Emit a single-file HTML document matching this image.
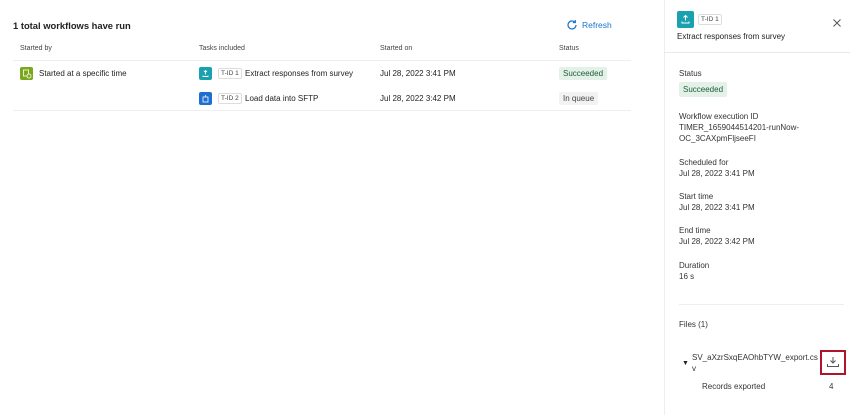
<!DOCTYPE html>
<html><head><style>
*{margin:0;padding:0;box-sizing:border-box}
body{width:850px;height:415px;background:#fff;font-family:"Liberation Sans",sans-serif;color:#222;position:relative;overflow:hidden;font-size:8px}
.a{position:absolute;white-space:nowrap}
.h{font-size:7px;color:#444}
.tid{position:absolute;border:1px solid #ddd;border-radius:2px;font-size:6.5px;color:#444;padding:1px 2px;background:#fff}
.ico{position:absolute;width:13px;height:13px;border-radius:2px}
.badge{position:absolute;border-radius:2px;padding:2px 4px;font-size:8px}
.lbl{font-size:8px;color:#333}
</style></head><body>
<div class="a" style="left:13px;top:20px;font-size:9.4px;font-weight:bold;color:#222">1 total workflows have run</div>
<svg class="a" style="left:566px;top:19px" width="12" height="12" viewBox="0 0 12 12"><path d="M10 6a4 4 0 1 1-1.3-3" fill="none" stroke="#1a73c9" stroke-width="1.2"/><path d="M9.3 1v2.5H6.8" fill="none" stroke="#1a73c9" stroke-width="1.2"/></svg>
<div class="a" style="left:582px;top:20px;color:#1a73c9;font-size:8.5px">Refresh</div>
<div class="a h" style="left:20px;top:45px">Started by</div>
<div class="a h" style="left:199px;top:45px">Tasks included</div>
<div class="a h" style="left:380px;top:45px">Started on</div>
<div class="a h" style="left:559px;top:45px">Status</div>
<div class="a" style="left:13px;top:60px;width:618px;height:1px;background:#eee"></div>
<div class="ico" style="left:20px;top:67px;background:#7aa81c"><svg width="13" height="13"><rect x="3.5" y="3" width="5" height="6" fill="none" stroke="#fff" stroke-width=".8"/><circle cx="9" cy="9" r="2" fill="#7aa81c" stroke="#fff" stroke-width=".8"/></svg></div>
<div class="a" style="left:39px;top:69px">Started at a specific time</div>
<div class="ico" style="left:199px;top:67px;background:#1aa1b0"><svg width="13" height="13"><path d="M6.5 3.5v4M5 5l1.5-1.5L8 5M4 8.5v1h5v-1" fill="none" stroke="#fff" stroke-width=".9"/></svg></div>
<div class="tid" style="left:218px;top:68px">T-ID 1</div>
<div class="a" style="left:245px;top:69px">Extract responses from survey</div>
<div class="a" style="left:380px;top:69px">Jul 28, 2022 3:41 PM</div>
<div class="badge" style="left:559px;top:67px;background:#e3f1e8;color:#1d5b34">Succeeded</div>
<div class="ico" style="left:199px;top:92px;background:#1f6fd0"><svg width="13" height="13"><rect x="4" y="5" width="5" height="5" fill="none" stroke="#fff" stroke-width=".8"/><path d="M6.5 3v2" stroke="#fff" stroke-width=".8"/></svg></div>
<div class="tid" style="left:218px;top:93px">T-ID 2</div>
<div class="a" style="left:245px;top:94px">Load data into SFTP</div>
<div class="a" style="left:380px;top:94px">Jul 28, 2022 3:42 PM</div>
<div class="badge" style="left:559px;top:92px;background:#f2f2f2;color:#444">In queue</div>
<div class="a" style="left:13px;top:110px;width:618px;height:1px;background:#eee"></div>

<div class="a" style="left:664px;top:0;width:186px;height:415px;background:#fff;border-left:1px solid #eee"></div>
<div class="a" style="left:664px;top:52px;width:186px;height:1px;background:#e8e8e8"></div>
<div class="ico" style="left:677px;top:11px;width:17px;height:17px;background:#1aa1b0"><svg width="17" height="17"><path d="M8.5 4.5v5M6.5 6.5l2-2 2 2M5 10.5v1.5h7v-1.5" fill="none" stroke="#fff" stroke-width="1"/></svg></div>
<div class="tid" style="left:698px;top:14px">T-ID 1</div>
<svg class="a" style="left:833px;top:19px" width="8" height="8"><path d="M0.5 0.5l7 7M7.5 0.5l-7 7" stroke="#555" stroke-width="1"/></svg>
<div class="a" style="left:677px;top:32px;font-size:8px">Extract responses from survey</div>
<div class="a lbl" style="left:679px;top:69px">Status</div>
<div class="badge" style="left:679px;top:82px;background:#e3f1e8;color:#1d5b34;padding:3px 4px">Succeeded</div>
<div class="a lbl" style="left:679px;top:111px;line-height:11px">Workflow execution ID<br>TIMER_1659044514201-runNow-<br>OC_3CAXpmFljseeFI</div>
<div class="a lbl" style="left:679px;top:157px;line-height:11px">Scheduled for<br>Jul 28, 2022 3:41 PM</div>
<div class="a lbl" style="left:679px;top:191px;line-height:11px">Start time<br>Jul 28, 2022 3:41 PM</div>
<div class="a lbl" style="left:679px;top:225px;line-height:11px">End time<br>Jul 28, 2022 3:42 PM</div>
<div class="a lbl" style="left:679px;top:260px;line-height:11px">Duration<br>16 s</div>
<div class="a" style="left:679px;top:304px;width:165px;height:1px;background:#eee"></div>
<div class="a lbl" style="left:679px;top:320px">Files (1)</div>
<div class="a" style="left:682px;top:360px;font-size:7px">▼</div>
<div class="a lbl" style="left:692px;top:352px;line-height:11px;font-size:8px">SV_aXzrSxqEAOhbTYW_export.cs<br>v</div>
<div class="a" style="left:820px;top:350px;width:26px;height:25px;border:2px solid #b0142c"></div>
<svg class="a" style="left:826px;top:356px" width="14" height="12"><path d="M7 1v6M4.5 4.5L7 7l2.5-2.5M1.5 8v2.5h11V8" fill="none" stroke="#555" stroke-width="1"/></svg>
<div class="a lbl" style="left:702px;top:382px">Records exported</div>
<div class="a lbl" style="left:829px;top:382px">4</div>
</body></html>
